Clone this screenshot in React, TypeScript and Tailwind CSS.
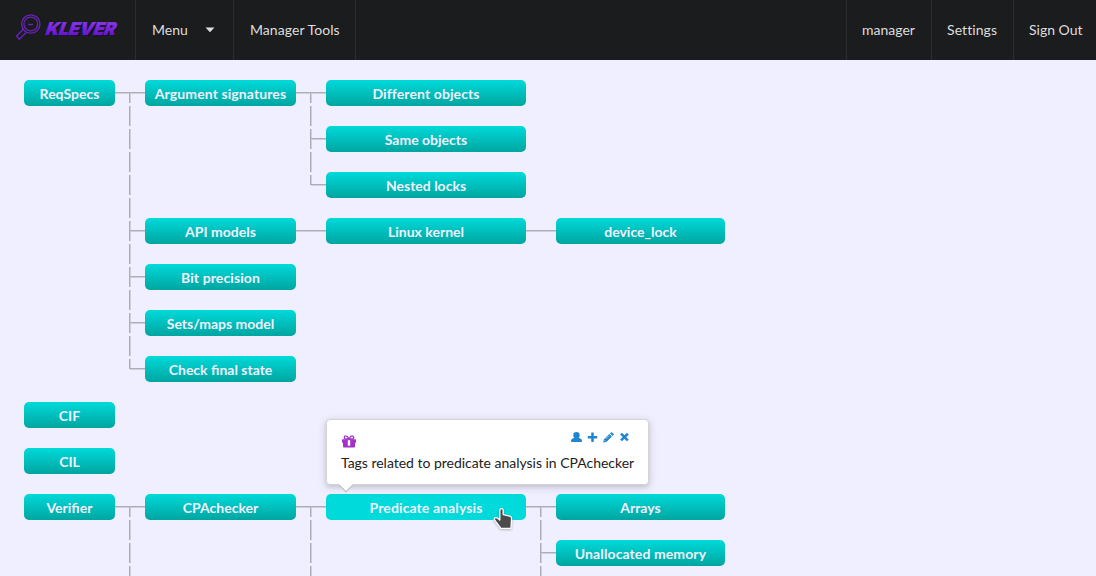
import React from "react";

type Joint = "none" | "line" | "tee" | "down" | "branch" | "end";

const COL = ["w-[91px]", "w-[151px]", "w-[200px]", "w-[169px]"];

function Connector({ kind }: { kind: Joint }) {
  const upper = kind === "down" || kind === "branch" || kind === "end";
  const lower = kind === "down" || kind === "branch" || kind === "tee";
  const full = kind === "line" || kind === "tee";
  const right = kind === "branch" || kind === "end";
  const verticals: [number, number][] = [];
  if (upper) verticals.push([0, 10], [13, 23]);
  if (lower) verticals.push([23, 33], [36, 46]);
  return (
    <svg width="30" height="46" className="block shrink-0" shapeRendering="crispEdges">
      {full && <rect x="0" y="23" width="30" height="1" fill="#d0cfdb" />}
      {right && <rect x="15" y="23" width="15" height="1" fill="#d0cfdb" />}
      {verticals.map(([a, b]) => (
        <g key={a}>
          <rect x="14" y={a} width="1" height={b - a} fill="#adadb6" />
          <rect x="15" y={a} width="1" height={b - a} fill="#d0cfdb" />
        </g>
      ))}
      {full && <rect x="0" y="22" width="30" height="1" fill="#adadb6" />}
      {right && <rect x="14" y="22" width="16" height="1" fill="#adadb6" />}
    </svg>
  );
}

const WIDE = ["Argument signatures", "Different objects", "Predicate analysis", "Unallocated memory", "Bit precision"];

function Tag({ label, active }: { label: string; active?: boolean }) {
  return (
    <div
      className={
        "flex h-[26px] w-full items-center justify-center rounded-[5px] pt-[2px] text-[14px] leading-[20px] font-bold whitespace-nowrap text-[#f0f0ff] " +
        (WIDE.includes(label) ? "tracking-[0.1px] " : "") +
        (active ? "bg-[#00dada]" : "bg-linear-to-b from-[#00dada] to-[#00a5a0]")
      }
    >
      {label}
    </div>
  );
}

type Row = { cells: (string | null)[]; joints: Joint[] };

const rows: Row[] = [
  { cells: ["ReqSpecs", "Argument signatures", "Different objects", null], joints: ["tee", "tee", "none"] },
  { cells: [null, null, "Same objects", null], joints: ["down", "branch", "none"] },
  { cells: [null, null, "Nested locks", null], joints: ["down", "end", "none"] },
  { cells: [null, "API models", "Linux kernel", "device_lock"], joints: ["branch", "line", "line"] },
  { cells: [null, "Bit precision", null, null], joints: ["branch", "none", "none"] },
  { cells: [null, "Sets/maps model", null, null], joints: ["branch", "none", "none"] },
  { cells: [null, "Check final state", null, null], joints: ["end", "none", "none"] },
  { cells: ["CIF", null, null, null], joints: ["none", "none", "none"] },
  { cells: ["CIL", null, null, null], joints: ["none", "none", "none"] },
  { cells: ["Verifier", "CPAchecker", "Predicate analysis", "Arrays"], joints: ["tee", "tee", "tee"] },
  { cells: [null, null, null, "Unallocated memory"], joints: ["down", "down", "branch"] },
];

function Logo() {
  return (
    <svg width="108" height="34" viewBox="0 0 108 34" className="block">
      <defs>
        <linearGradient id="violet" x1="0" y1="0" x2="0" y2="1">
          <stop offset="0" stopColor="#9440f0" />
          <stop offset="1" stopColor="#5c0cc4" />
        </linearGradient>
      </defs>
      <g fill="none" stroke="#6b21c0" strokeWidth="1.300" strokeLinejoin="round">
        <circle cx="16.8" cy="13" r="9.2" />
        <circle cx="16.8" cy="13" r="6.900" />
        <path d="M9.300 18.300 L2.600 25 L5.400 28.300 L12.200 21.500" />
        <path d="M14.200 13.200 q2.400 1 4.800 0" />
      </g>
      <g fontFamily="Inter, sans-serif" fontWeight="900" fontSize="17.500" transform="translate(30.500 23.700) skewX(-19)">
        <text x="1.2" y="1.2" textLength="70" lengthAdjust="spacingAndGlyphs" fill="#08080c">KLEVER</text>
        <text x="0" y="0" textLength="70" lengthAdjust="spacingAndGlyphs" fill="url(#violet)" stroke="url(#violet)" strokeWidth=".5" strokeLinejoin="miter">KLEVER</text>
      </g>
    </svg>
  );
}

function UserIcon() {
  return (
    <svg width="11" height="11" viewBox="0 0 11 11" fill="#2185d0">
      <path d="M5.500 0C7.500 0 8.700 1.200 8.700 3.200C8.700 4.500 8.200 5.400 7.500 6C9.700 6.300 11 7.200 11 9V9.300Q11 10.100 10.200 10.100H.8Q0 10.100 0 9.300V9C0 7.200 1.300 6.300 3.500 6C2.800 5.400 2.300 4.500 2.300 3.200C2.300 1.200 3.500 0 5.500 0Z" />
    </svg>
  );
}

function PlusIcon() {
  return (
    <svg width="11" height="11" viewBox="0 0 11 11" fill="#2185d0">
      <path d="M4.8.6h1.400q.6 0 .6.6V4.100h2.900q.6 0 .6.6v1.100q0 .6-.6.6H6.800v2.900q0 .6-.6.6H4.800q-.6 0-.6-.6V6.400H1.300Q.7 6.400.7 5.800V4.700q0-.6.6-.6h2.900V1.200q0-.6.6-.6Z" />
    </svg>
  );
}

function PencilIcon() {
  return (
    <svg width="11" height="11" viewBox="0 0 11 11" fill="#2185d0">
      <path d="M.2 10.500.8 7.400 6.300 1.900 8.900 4.500 3.400 9.900Z M7 1.300 7.900.4Q8.500-.1 9.100.4L10.500 1.800Q11 2.400 10.500 3L9.500 3.900Z" />
      <path d="M1.400 8.300 2.600 9.500M2.900 6.800 6 3.700" stroke="#fff" strokeWidth=".6" fill="none" />
    </svg>
  );
}

function CloseIcon() {
  return (
    <svg width="11" height="11" viewBox="0 0 11 11">
      <path d="M2.900 2.500 8 7.600M8 2.500 2.900 7.600" stroke="#2185d0" strokeWidth="2.500" strokeLinecap="square" />
    </svg>
  );
}

function GiftIcon() {
  return (
    <svg width="14" height="13" viewBox="0 0 14 13" className="block">
      <path d="M6.600 4H4Q2.300 4 2.300 2.400T4 .9Q5.400.9 7 4Q8.600.9 10 .9T11.700 2.400T10 4H7.400" fill="none" stroke="#a333c8" strokeWidth="1.300" />
      <path d="M.5 4.200h13q.5 0 .5.5V7.400q0 .4-.4.4H13v3.700q0 1-1 1H2q-1 0-1-1V7.800H.4Q0 7.800 0 7.400V4.700q0-.5.5-.5Z" fill="#a333c8" />
      <path d="M5.800 5.200h2.400v5.500h-2.400Z" fill="#fff" />
    </svg>
  );
}

function Popup() {
  return (
    <div className="absolute top-[419px] left-[326px] h-[66px] w-[323px] rounded-[4px] border border-[#d4d4d5] bg-white px-[14px] pt-[9px] shadow-[0_2px_4px_0_rgba(34,36,38,0.12),0_2px_10px_0_rgba(34,36,38,0.15)]">
      <div className="flex h-[20px] justify-between">
        <div className="pt-[6px] pl-[1px]">
          <GiftIcon />
        </div>
        <div className="flex gap-[5px] pt-[3px] pr-[4px]">
          <UserIcon />
          <PlusIcon />
          <PencilIcon />
          <CloseIcon />
        </div>
      </div>
      <div className="mt-[4px] text-[14px] leading-[20px] tracking-[-0.02px] whitespace-nowrap text-[#212121]">
        Tags related to predicate analysis in CPAchecker
      </div>
      <div className="absolute -bottom-[5px] left-[14px] size-[10px] rotate-45 bg-white shadow-[1px_1px_0_0_#bababc]" />
    </div>
  );
}

function Hand() {
  return (
    <svg width="24" height="26" viewBox="0 0 24 26" className="absolute top-[505px] left-[492px] drop-shadow-[0_1px_1px_rgba(0,0,0,0.25)]">
      <path
        d="M7.800 5.400Q7.800 3.600 9.500 3.600T11.200 5.400V9.600L17.700 11.200Q19.800 11.700 19.600 13.800L18.900 23.300H8.900L2.500 14.900Q1.600 12.900 3.700 12.700Q5.400 12.600 7.800 15Z"
        fill="#4b4b4b"
        stroke="#fff"
        strokeWidth="1.300"
        strokeLinejoin="round"
      />
    </svg>
  );
}

export default function App() {
  return (
    <div className="relative h-[576px] w-[1096px] overflow-hidden bg-[#f0efff] font-['Lato',sans-serif]">
      <header className="flex h-[60px] bg-[#1b1c1d] text-[14px] leading-[20px] text-[#dededf]">
        <div className="flex w-[136px] border-r border-[#2c2d2e] pt-[11px] pl-[14px]">
          <Logo />
        </div>
        <div className="flex w-[98px] items-center border-r border-[#2c2d2e] pl-[16px]">
          Menu
          <svg width="10" height="6" viewBox="0 0 10 6" className="ml-[17px]">
            <path d="M.5.5h9L5 5.300Z" fill="#dededf" />
          </svg>
        </div>
        <div className="flex w-[122px] items-center border-r border-[#2c2d2e] pl-[16px] tracking-[0.06px]">Manager Tools</div>
        <div className="ml-auto flex w-[86px] items-center border-x border-[#2c2d2e] pl-[15px]">manager</div>
        <div className="flex w-[82px] items-center border-r border-[#2c2d2e] pl-[15px] tracking-[0.08px]">Settings</div>
        <div className="flex w-[82px] items-center pl-[15px]">Sign Out</div>
      </header>
      <main className="flex flex-col pt-[10px] pl-[24px]">
        {rows.map((row, r) => (
          <div key={r} className="flex h-[46px] items-center">
            {row.cells.map((cell, c) => (
              <React.Fragment key={c}>
                <div className={"shrink-0 " + COL[c]}>
                  {cell && <Tag label={cell} active={cell === "Predicate analysis"} />}
                </div>
                {c < 3 && <Connector kind={row.joints[c]} />}
              </React.Fragment>
            ))}
          </div>
        ))}
      </main>
      <Popup />
      <Hand />
    </div>
  );
}
